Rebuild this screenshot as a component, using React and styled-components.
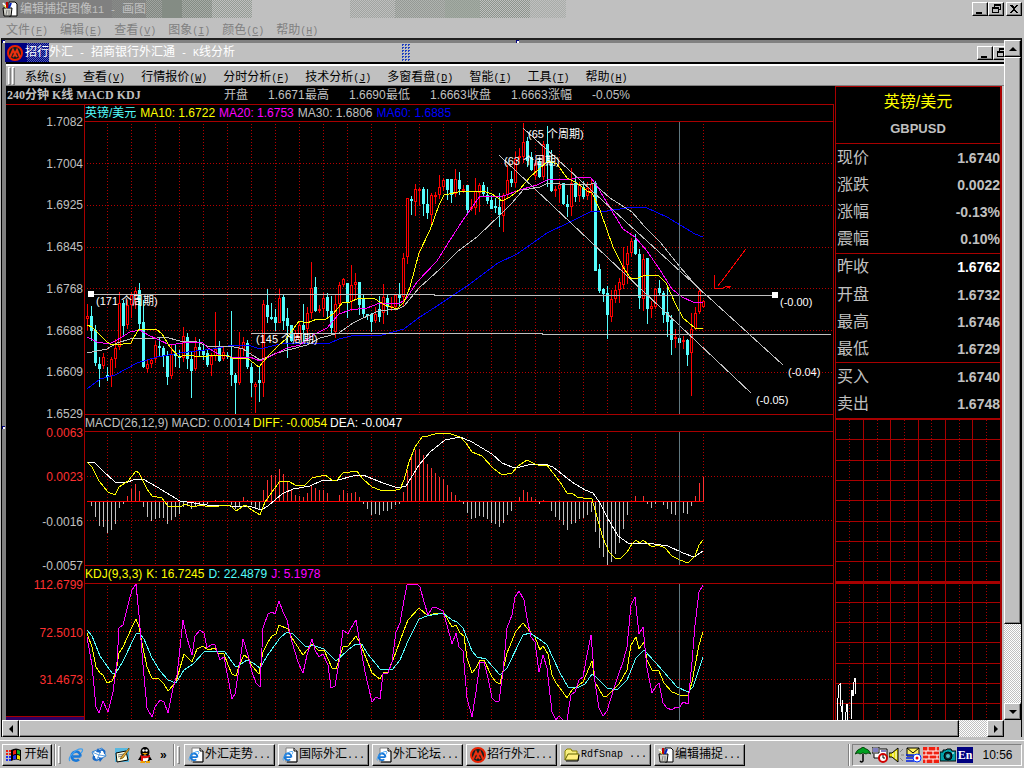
import React from 'react';
import styled, { createGlobalStyle, css } from 'styled-components';

const FACE = '#c0c0c0';
const SHADE = '#808080';
const LINE = '#a80000';
const DOTS = '#b40000';
const RED = '#ff0000';
const CYAN = '#54fcfc';
const YELLOW = '#ffff00';
const MAGENTA = '#ff00ff';
const BLUE = '#0000ff';

const Global = createGlobalStyle`
  *, *::before, *::after { box-sizing: border-box; }
  body { margin: 0; background: ${FACE}; }
  button { margin: 0; padding: 0; border: 0; background: none; color: inherit; font: inherit; }
  svg { display: block; flex: none; }
`;

const raised = css`
  background: ${FACE};
  border: 1px solid;
  border-color: #fff #000 #000 #fff;
  box-shadow: inset -1px -1px 0 ${SHADE};
`;
const checker = (a, b) => css`
  background: conic-gradient(${a} 25%, ${b} 0 50%, ${a} 0 75%, ${b} 0) 0 0 / 2px 2px;
`;

/* ---------- text ---------- */
const Mixed = styled.span`
  font-family: 'Liberation Mono', monospace;
  font-size: 10px;
  white-space: pre;
`;
const Han = styled.span`
  font-family: 'Noto Sans CJK SC', sans-serif;
  font-size: 12px;
`;
const Song = ({ children }) => (
  <Mixed>
    {children.split(/([\u4e00-\u9fff]+)/).filter(Boolean).map((part, i) =>
      /[\u4e00-\u9fff]/.test(part) ? <Han key={i}>{part}</Han> : part,
    )}
  </Mixed>
);

/* ---------- shell ---------- */
const Screen = styled.div`
  display: flex;
  flex-direction: column;
  min-height: 100vh;
  background: ${FACE};
  font: 12px/16px 'Liberation Sans', 'Noto Sans CJK SC', sans-serif;
`;
const OuterTitle = styled.header`
  position: relative;
  display: flex;
  align-items: center;
  height: 18px;
  padding: 0 2px;
  color: ${FACE};
`;
const Bands = styled.div`
  position: absolute;
  inset: 0;
  display: flex;
`;
const Band = styled.i`
  width: ${(p) => p.$w}px;
  ${(p) => checker(p.$a, p.$b)}
`;
const TitleText = styled.h1`
  position: relative;
  flex: 1;
  margin: 0 0 0 2px;
  font-size: 12px;
  font-weight: 400;
  line-height: 18px;
`;
const Buttons = styled.div`
  position: relative;
  display: flex;
`;
const WinButton = styled.button`
  ${raised}
  width: 16px;
  height: 14px;
  margin-left: ${(p) => (p.$apart ? 2 : 0)}px;
`;
const Menu = styled.nav`
  display: flex;
  align-items: center;
  gap: ${(p) => p.$gap}px;
  height: 20px;
  padding: 3px 0 0 ${(p) => p.$pad}px;
  color: ${(p) => p.$color};
  line-height: 17px;
`;
const Frame = styled.main`
  flex: 1;
  display: grid;
  grid-template: 1fr 17px / 1fr 17px;
  margin: 0 2px 0 1px;
  border: solid #000;
  border-width: 2px 1px 0 1px;
  border-top-color: #202020;
  background: ${FACE};
`;
const Canvas = styled.div`
  position: relative;
  display: flex;
  flex-direction: column;
  min-width: 0;
  padding: 3px 0 0 3px;
  background: ${SHADE};
  overflow: hidden;
`;
const Handle = styled.i`
  position: absolute;
  left: ${(p) => p.$x}px;
  top: ${(p) => p.$y}px;
  width: 3px;
  height: 3px;
  background: #fff;
  border: solid #000080;
  border-width: 1px 0 0 1px;
`;
const VBar = styled.div`
  display: flex;
  flex-direction: column;
  ${checker('#fff', FACE)}
`;
const HBar = styled.div`
  display: flex;
  ${checker('#fff', FACE)}
`;
const Arrow = styled.button`
  ${raised}
  display: grid;
  place-items: center;
  flex: none;
  width: 17px;
  height: 17px;
`;
const Thumb = styled.div`
  ${raised}
  flex: ${(p) => p.$part};
`;
const Slack = styled.div`
  flex: ${(p) => p.$part};
`;
const Corner = styled.div`
  background: ${FACE};
`;

/* ---------- application window ---------- */
const AppTitle = styled.div`
  display: flex;
  align-items: center;
  height: 19px;
  margin-right: -5px;
  background: ${FACE};
  color: #fff;
  line-height: 18px;
`;
const TitleLead = styled.div`
  display: flex;
  align-items: center;
  gap: 2px;
  height: 19px;
  padding-left: 2px;
  background: linear-gradient(90deg, #000080 22px, transparent 22px 44px, ${FACE} 44px),
    conic-gradient(#000080 25%, #5060b0 0 50%, #000080 0 75%, #5060b0 0) 0 0 / 2px 2px;
`;
const Dither = styled.i`
  width: 10px;
  height: 18px;
  margin-left: 166px;
  background: conic-gradient(#2040c0 25%, ${FACE} 0) 0 0 / 3px 3px;
`;
const Spring = styled.div`
  flex: 1;
`;
const MenuFrame = styled.div`
  display: flex;
  align-items: center;
  gap: 1px;
  height: 24px;
  margin-left: 1px;
  padding: 2px 0 0 2px;
  border-top: 2px solid #000;
  border-bottom: 1px solid ${SHADE};
  background: ${FACE};
  box-shadow: inset 0 2px 0 #fff;
`;
const Grip = styled.i`
  flex: none;
  width: 3px;
  height: ${(p) => p.$h}px;
  border: 1px solid;
  border-color: #fff ${SHADE} ${SHADE} #fff;
`;
const Work = styled.div`
  flex: 1;
  display: flex;
  min-height: 0;
  padding-right: 2px;
  margin-left: 1px;
  background: ${FACE};
`;
const Charts = styled.section`
  flex: 1;
  display: flex;
  flex-direction: column;
  min-width: 0;
  background: #000;
  color: ${FACE};
`;
const Readout = styled.div`
  display: flex;
  align-items: center;
  height: 18px;
`;
const Heading = styled.h2`
  width: 217px;
  margin: 0 0 0 1px;
  font: 700 12px/16px 'Liberation Serif', 'Noto Sans CJK SC', serif;
`;
const Figure = styled.span`
  display: flex;
  align-items: center;
  width: 81px;
  gap: 20px;
  white-space: nowrap;
`;
const Body = styled.div`
  flex: 1;
  display: flex;
  min-height: 0;
  border-top: 1px solid ${LINE};
  border-right: 1px solid ${LINE};
  margin-right: 1px;
`;
const Axis = styled.div`
  display: flex;
  flex-direction: column;
  gap: 5px;
  flex: none;
  width: 78px;
  padding-top: 10px;
`;
const Scale = styled.ol`
  display: flex;
  flex-direction: column;
  justify-content: space-between;
  height: ${(p) => p.$h}px;
  margin: 0;
  padding: 0 1px 0 0;
  list-style: none;
  text-align: right;
  line-height: 14px;
`;
const Tick = styled.li`
  color: ${(p) => (p.$hot ? '#ff3030' : FACE)};
`;
const AxisFoot = styled.div`
  height: 4px;
  margin-top: auto;
  border-top: 1px solid ${LINE};
  background: #300060;
`;
const Panels = styled.div`
  flex: 1;
  display: flex;
  flex-direction: column;
  min-width: 0;
  border-left: 1px solid ${LINE};
`;
const Panel = styled.figure`
  display: flex;
  flex-direction: column;
  flex: ${(p) => (p.$grow ? '1' : 'none')};
  min-height: 0;
  margin: 0;
`;
const Caption = styled.figcaption`
  display: flex;
  gap: ${(p) => p.$gap}px;
  height: ${(p) => p.$h || 16}px;
  line-height: 16px;
  white-space: nowrap;
`;
const Ink = styled.span`
  color: ${(p) => p.$c};
`;
const Plot = styled.div`
  flex: ${(p) => (p.$h ? 'none' : '1')};
  height: ${(p) => (p.$h ? p.$h + 'px' : 'auto')};
  min-height: 120px;
  contain: size;
  overflow: hidden;
  border-top: 1px solid ${LINE};
  border-bottom: ${(p) => (p.$h ? 1 : 0)}px solid ${LINE};
`;
const Note = styled.text`
  fill: #fff;
  font: 11px 'Liberation Sans', 'Noto Sans CJK SC', sans-serif;
`;

/* ---------- quote column ---------- */
const Quotes = styled.aside`
  display: flex;
  flex-direction: column;
  flex: none;
  width: 167px;
  border: solid ${LINE};
  border-width: 1px 2px 0 1px;
  background: #000;
  color: ${FACE};
`;
const Pair = styled.h3`
  margin: 0;
  height: 28px;
  font-size: 16px;
  font-weight: 400;
  line-height: 30px;
  text-align: center;
  color: ${YELLOW};
`;
const Code = styled.p`
  margin: 0;
  height: 28px;
  font-size: 13px;
  font-weight: 700;
  line-height: 28px;
  text-align: center;
`;
const QuoteTable = styled.table`
  width: 100%;
  height: 277px;
  border-collapse: collapse;
  border-bottom: 2px solid ${LINE};
`;
const QuoteGroup = styled.tbody`
  border-top: 1px solid ${LINE};
`;
const QuoteName = styled.th`
  padding: 0 0 0 1px;
  font-size: 16px;
  font-weight: 400;
  line-height: 24px;
  text-align: left;
`;
const QuoteValue = styled.td`
  padding: 0;
  font-size: 14px;
  font-weight: 700;
  text-align: right;
  color: ${(p) => (p.$bright ? '#fff' : FACE)};
`;
const TickArea = styled.div`
  flex: 1;
  min-height: 120px;
  contain: size;
  overflow: hidden;
`;

/* ---------- task bar ---------- */
const Taskbar = styled.footer`
  display: flex;
  align-items: center;
  height: 28px;
  margin-top: 3px;
  padding: 2px 2px 2px 2px;
  border-top: 1px solid #fff;
  background: ${FACE};
  line-height: 18px;
`;
const StartButton = styled.button`
  ${raised}
  display: flex;
  align-items: center;
  justify-content: center;
  gap: 2px;
  width: 50px;
  height: 22px;
`;
const Divider = styled.i`
  flex: none;
  width: 2px;
  height: 22px;
  margin: 0 2px;
  border-left: 1px solid ${SHADE};
  border-right: 1px solid #fff;
`;
const Quick = styled.div`
  display: flex;
  align-items: center;
  gap: 7px;
  flex: none;
  width: 110px;
  padding-left: 7px;
`;
const Tasks = styled.div`
  display: flex;
  flex: 1;
  gap: 3px;
  min-width: 0;
  margin-left: 4px;
`;
const Task = styled.button`
  ${raised}
  display: flex;
  align-items: center;
  flex: 0 1 91px;
  height: 22px;
  padding-left: 3px;
  gap: 1px;
  overflow: hidden;
`;
const Tray = styled.div`
  display: flex;
  align-items: center;
  gap: 1px;
  flex: none;
  width: 170px;
  height: 22px;
  padding-left: 2px;
  border: 1px solid;
  border-color: ${SHADE} #fff #fff ${SHADE};
`;
const Lang = styled.span`
  width: 16px;
  background: #000080;
  color: #fff;
  font: 700 12px/16px 'Liberation Serif', serif;
  text-align: center;
`;
const Clock = styled.time`
  flex: 1;
  font-size: 12px;
  text-align: center;
`;

/* ---------- data ---------- */
/* Candle samples: high, body top, body bottom, low, in thirds of a pixel below y = 100; "r" rises, "c" falls. */
const CANDLES = `r612,648,656,690 c618,648,692,722 c675,690,788,797 c770,792,806,860 r760,770,797,808 c802,825,831,842 r772,778,828,860 r718,745,776,803 r576,610,740,750 c600,610,678,706 r600,615,674,686 r575,586,616,655 r560,574,588,628 c549,570,672,686 c600,666,800,805 r780,793,806,818 r776,780,792,804 r722,736,778,788 c710,738,744,770 c738,744,768,800 c752,768,830,854 r734,762,828,836 c735,760,768,800 c750,768,772,803 r680,708,774,785 c698,712,776,806 c755,777,812,893 r712,740,808,812 c718,740,752,770 c736,750,766,780 c750,758,794,800 r760,768,796,828 r635,748,768,784 c722,745,782,786 r738,755,776,782 c755,764,772,776 c632,770,824,858 c820,824,848,942 r697,745,850,855 r712,725,746,768 c720,730,802,806 c790,802,848,890 r845,852,860,938 c798,840,850,906 r600,612,848,890 c567,615,650,668 c608,650,655,660 c628,652,668,694 r568,595,668,670 c584,592,664,690 c624,655,678,773 c674,676,722,727 r690,700,722,722 r670,676,720,724 c612,675,690,727 r622,638,688,704 r486,565,640,658 c532,562,632,636 r614,628,632,640 r580,595,628,652 c578,592,632,656 c588,633,685,698 r585,612,695,714 r545,556,612,640 r533,536,556,560 c548,550,606,654 r495,555,606,634 r520,546,556,600 c545,546,616,645 c585,594,643,652 c642,643,648,660 c640,643,665,695 r620,642,662,668 c588,628,650,666 r552,590,640,672 c584,594,620,645 r590,618,625,632 r585,585,622,626 c549,585,594,620 r460,475,592,618 r294,295,472,492 c288,296,304,345 r253,268,306,348 r265,268,270,318 c262,268,312,348 c266,312,338,356 r280,285,344,372 r275,284,290,312 r225,262,284,298 r235,240,262,272 c236,238,270,300 c236,238,284,308 r207,238,282,290 c215,240,268,286 r255,266,270,278 c256,256,330,338 r298,320,328,334 r235,272,325,345 r250,256,278,336 c246,256,282,292 c262,284,302,312 c284,300,328,328 c294,318,324,338 c278,321,345,380 r280,284,348,395 r195,240,284,294 c213,236,248,260 r155,178,248,262 r145,168,172,185 r68,125,170,188 c110,122,182,200 c156,170,210,212 r180,190,228,240 c175,185,232,235 r122,132,230,240 c78,132,190,262 c150,186,272,276 r258,268,272,290 r246,256,266,308 c250,250,312,316 c284,312,322,350 r205,250,322,348 c232,250,290,306 r247,254,287,305 c243,260,290,296 r246,265,288,300 r236,252,276,334 c243,250,512,512 c492,506,572,578 c564,567,581,606 c558,580,644,716 r570,598,650,666 r555,570,596,608 r533,546,570,608 r441,498,556,567 r438,460,496,552 r414,424,460,472 c402,420,462,466 c448,462,594,626 r462,478,598,632 c474,475,626,672 r604,618,628,654 r565,568,620,626 c540,564,578,586 c573,578,645,668 c565,636,665,710 c646,660,720,765 r686,711,716,744 c712,714,728,728 r708,720,724,746 c716,720,765,798 r640,688,760,887 r620,640,688,690 r568,572,636,642 r600,604,620,624`
  .split(' ')
  .map((s) => ({ up: s[0] === 'r', v: s.slice(1).split(',').map((n) => 100 + Math.round(n / 3)) }));

/* Histogram ends, in thirds of a pixel below y = 410; the zero line lies at 274. */
const BARS = '274,288,320,348,352,368,360,342,294,282,258,236,222,243,290,320,334,328,324,324,342,330,320,312,290,284,298,288,284,284,282,276,270,274,270,272,284,296,288,262,270,286,298,300,240,210,195,195,177,192,212,236,255,257,262,250,229,234,240,240,249,274,274,255,240,249,249,246,262,282,297,315,313,315,303,303,297,284,281,246,180,142,120,117,136,162,175,190,201,208,225,246,255,270,281,308,326,323,317,321,326,338,341,351,338,315,303,274,261,240,246,262,268,282,270,274,303,320,330,345,360,342,338,326,323,315,305,366,413,440,465,456,432,398,356,315,274,258,274,258,281,293,281,274,285,297,312,315,315,308,312,288,258,218,200'
  .split(',')
  .map((n) => 410 + Math.round(n / 3));

const MA10 = '87,325 92,327 96,331 103,338 107,342 112,345 123,344 131,343 134,337 139,329 156,329 162,334 170,347 179,357 185,355 203,357 213,355 227,356 235,359 247,358 259,367 268,356 277,347 287,338 299,321 307,323 317,319 325,320 333,314 343,302 350,302 359,298 375,299 385,305 397,309 404,302 410,287 419,253 430,230 439,205 444,195 463,191 483,191 492,194 502,201 510,197 520,189 530,177 548,161 557,164 567,178 577,183 587,191 592,193 600,210 613,247 623,267 631,279 638,278 645,275 658,275 666,283 675,303 683,318 695,328 703,328';
const MA20 = '87,337 97,342 109,344 117,340 130,332 140,330 148,335 170,345 183,343 202,342 208,348 220,355 237,358 250,357 260,361 273,355 287,348 300,345 313,335 327,328 339,314 350,310 367,308 380,303 400,303 406,299 417,282 437,261 450,240 463,220 480,196 503,196 523,189 537,185 547,180 572,179 580,177 590,177 596,184 607,203 623,229 635,237 647,251 660,270 672,289 682,297 693,302 703,303';
const MA30 = '87,353 107,349 117,343 130,339 157,338 165,337 180,341 197,342 210,347 230,346 243,349 260,360 277,353 307,345 320,338 339,333 343,330 353,323 378,311 398,309 404,306 419,288 440,269 457,252 477,237 500,215 512,203 523,190 540,187 548,183 560,184 589,185 593,183 610,198 632,212 645,227 660,242 680,267 692,281 703,293';
const MA60 = '87,389 100,379 115,375 137,363 157,357 180,353 213,349 228,346 248,345 260,349 280,344 300,343 330,343 339,339 355,335 382,335 404,329 417,319 440,304 470,284 498,263 517,254 547,233 570,222 590,212 607,211 633,207 645,207 667,217 695,234 703,237';
const DIFF = '87,462 92,467 99,481 108,492 115,495 119,487 128,481 136,471 139,473 147,489 152,496 162,498 168,506 180,507 185,504 192,507 202,505 208,507 230,505 236,511 245,505 252,510 260,515 265,502 272,492 280,481 288,481 297,486 305,485 312,478 325,475 332,480 337,480 343,473 357,471 363,479 372,487 380,490 392,491 400,489 404,480 409,462 415,447 422,437 428,436 438,433 448,433 460,437 466,443 472,452 482,456 493,468 502,475 512,473 518,466 527,460 533,463 540,466 547,465 553,473 560,482 567,493 572,493 577,497 583,498 592,499 597,517 603,538 609,552 615,558 621,558 627,552 632,544 636,540 640,543 643,540 652,547 658,545 665,548 672,556 680,560 688,563 695,556 699,545 703,540';
const DEA = '87,462 95,463 103,471 115,482 126,483 135,479 143,479 157,487 180,501 207,505 230,506 252,507 261,510 268,506 282,494 293,489 310,486 323,480 338,480 353,476 363,475 383,483 398,488 406,486 419,465 430,452 445,440 460,437 472,442 492,454 502,463 512,467 520,467 532,464 545,464 553,467 572,482 585,490 593,493 600,503 607,517 618,536 628,543 647,543 668,546 683,553 694,557 703,551';
const K = '87,633 92,647 96,667 100,673 103,675 107,683 112,681 116,672 119,653 123,647 132,627 136,619 139,627 143,648 147,667 152,678 159,679 164,684 168,691 176,682 180,668 184,654 192,662 197,649 203,646 208,650 215,648 218,653 224,654 228,665 232,674 236,676 239,666 244,655 248,658 252,666 259,674 263,652 268,642 272,636 276,634 279,625 288,629 292,638 303,655 312,644 319,651 324,650 332,668 336,669 343,647 348,646 356,636 360,643 372,673 380,679 384,672 388,672 396,652 404,630 408,620 419,608 428,616 435,613 444,613 452,627 456,625 460,633 464,636 467,658 472,673 476,668 480,660 484,660 492,677 496,682 500,684 507,653 516,631 523,623 532,634 535,637 540,650 543,646 548,654 552,675 556,683 560,688 567,698 572,690 583,682 592,661 595,682 603,696 607,696 619,684 627,670 631,645 636,637 639,649 644,642 647,660 652,670 659,671 664,683 672,692 680,695 688,696 692,682 699,645 703,632';
const D = '87,630 92,636 100,656 112,673 116,673 123,661 136,634 139,633 144,639 152,658 160,671 168,680 176,683 184,670 193,664 204,652 210,651 225,652 235,666 238,666 247,660 253,663 260,668 267,656 280,638 287,632 293,634 306,647 312,645 324,649 336,661 348,650 356,644 362,644 367,653 380,669 392,670 400,660 408,641 419,619 427,616 443,613 452,620 457,622 463,628 472,651 477,657 486,659 500,675 507,668 523,635 530,633 542,641 547,645 560,673 568,687 577,688 585,684 592,674 597,678 607,688 617,690 627,680 636,658 644,650 655,662 663,671 677,687 688,692 693,687 703,657';
const J = '87,637 92,665 96,707 99,713 103,701 108,712 113,692 117,662 119,628 123,625 128,605 132,590 136,584 139,615 143,665 147,708 152,717 155,707 160,700 164,702 168,713 173,688 177,675 180,648 183,620 187,638 192,655 195,636 200,630 204,633 207,648 212,644 215,645 220,660 224,657 232,699 235,694 240,662 243,639 248,655 252,672 256,683 260,687 263,628 268,614 272,612 275,614 279,601 283,612 287,620 292,642 298,662 303,673 307,655 312,639 315,650 319,657 323,654 328,665 331,688 335,686 339,662 343,630 348,634 351,628 356,620 359,638 365,672 372,702 376,697 380,699 383,674 388,673 392,662 396,632 400,623 404,600 407,585 417,584 420,587 424,602 428,615 432,608 435,607 443,611 447,625 452,644 456,633 459,647 463,651 467,698 472,717 476,692 480,662 484,662 488,678 492,698 496,702 499,701 503,672 507,628 512,615 515,597 519,591 524,600 527,618 531,637 535,642 539,672 543,655 547,668 552,712 556,720 559,716 563,720 567,720 571,695 575,692 579,680 583,677 587,655 591,635 595,682 599,708 603,716 607,711 611,698 615,685 619,673 623,662 627,647 631,605 635,597 639,634 643,627 647,668 652,693 656,686 659,683 663,703 667,708 672,710 676,707 679,708 683,702 688,704 692,662 695,625 699,592 703,585';

const COLUMNS = [...Array.from({ length: 18 }, (_, i) => 107 + 24 * i), ...Array.from({ length: 8 }, (_, i) => 535 + 24 * i)];

const Curve = ({ points, color }) => <polyline points={points} fill="none" stroke={color} />;

function ChartSvg({ top, levels, label, children }) {
  return (
    <svg width="100%" height="100%" shapeRendering="crispEdges" role="img" aria-label={label}>
      <g transform={`translate(-85 ${-top})`}>
        {COLUMNS.map((x) => (
          <line key={x} x1={x} x2={x} y1={top + 2} y2={top + 600} stroke={DOTS} strokeDasharray="1 2" />
        ))}
        {levels.map((y) => (
          <line key={y} x1="87" x2="833" y1={y} y2={y} stroke={DOTS} strokeDasharray="1 2" />
        ))}
        {children}
        <rect x="679" y={top} width="1" height="600" fill="#607880" />
      </g>
    </svg>
  );
}

const Price = () => (
  <ChartSvg top={122} levels={[163, 205, 247, 288, 330, 372]} label="英镑/美元 K线">
    {CANDLES.map(({ up, v: [hi, top, bottom, lo] }, i) => {
      const x = 87 + 4 * i;
      const h = Math.max(bottom - top, 2);
      const c = up ? RED : CYAN;
      return (
        <g key={i} fill={c}>
          <rect x={x} y={hi} width="1" height={lo - hi} />
          <rect x={x - 1} y={top} width="3" height={h} />
          {up && h > 2 && <rect x={x} y={top + 1} width="1" height={h - 2} fill="#000" />}
        </g>
      );
    })}
    <Curve points={MA60} color={BLUE} />
    <Curve points={MA30} color={FACE} />
    <Curve points={MA20} color={MAGENTA} />
    <Curve points={MA10} color={YELLOW} />
    <g fill="none" stroke={FACE}>
      <path d="M91 294H434V295H775M251 333H542V334H831M523 128L783 365M499 155L751 393" />
    </g>
    <path d="M88 291h6v6h-6zM772 292h6v6h-6z" fill="#fff" />
    <path d="M746 249L718 286M714 275V288H723L727 286H731M727 287H730" fill="none" stroke={RED} />
    <Note x="96" y="305">(171 个周期)</Note>
    <Note x="256" y="343">(145 个周期)</Note>
    <Note x="528" y="138">(65 个周期)</Note>
    <Note x="504" y="165">(63 个周期)</Note>
    <Note x="780" y="306">(-0.00)</Note>
    <Note x="788" y="376">(-0.04)</Note>
    <Note x="756" y="404">(-0.05)</Note>
  </ChartSvg>
);

const Macd = () => (
  <ChartSvg top={432} levels={[476, 520]} label="MACD">
    {BARS.map((y, i) => (
      <rect key={i} x={87 + 4 * i} y={Math.min(y, 501)} width="1" height={Math.abs(y - 501)} fill={y < 501 ? '#ff3030' : FACE} />
    ))}
    <rect x="87" y="501" width="617" height="1" fill={RED} />
    <Curve points={DEA} color="#fff" />
    <Curve points={DIFF} color={YELLOW} />
  </ChartSvg>
);

const Kdj = () => (
  <ChartSvg top={584} levels={[631, 679]} label="KDJ">
    <Curve points={K} color={YELLOW} />
    <Curve points={D} color={CYAN} />
    <Curve points={J} color={MAGENTA} />
  </ChartSvg>
);

const TickChart = () => (
  <svg width="100%" height="100%" shapeRendering="crispEdges" role="img" aria-label="分时">
    {[1, 2, 3, 4, 5].map((k) => (
      <line key={k} x1={`${(k * 100) / 6}%`} x2={`${(k * 100) / 6}%`} y1="0" y2="600" stroke={LINE} />
    ))}
    {[1, 3, 5, 7, 9, 11].map((k) => (
      <line key={k} x1={`${(k * 100) / 12}%`} x2={`${(k * 100) / 12}%`} y1="0" y2="600" stroke={LINE} strokeDasharray="1 2" />
    ))}
    {[19, 40, 60, 80, 101, 121, 141, 182, 202, 222, 243, 263, 283].map((y) => (
      <rect key={y} x="0" y={y} width="100%" height="1" fill={LINE} />
    ))}
    <rect x="0" y="161" width="100%" height="3" fill={LINE} />
    <path d="M1 300V292L3 265L4 264V280L6 292V280L7 300M9 300L11 284L12 300M15 300L16 270L17 276L18 262L19 258L20 274" fill="none" stroke="#fff" />
  </svg>
);

/* ---------- icons ---------- */
const Svg16 = ({ children, size = 16 }) => (
  <svg width={size} height={size} viewBox="0 0 16 16" aria-hidden="true">{children}</svg>
);
const PaintIcon = () => (
  <Svg16>
    <path d="M7 1h6l2 2v12H7z" fill="#fff" stroke="#000" />
    <path d="M1 7h9l-1 8H2z" fill="#d0d0c8" stroke="#000" />
    <path d="M5 9l-1 5M7 9v5" stroke={SHADE} />
    <path d="M1 2l4 5" stroke="#fff" strokeWidth="2" />
    <path d="M5 1v6" stroke="#c00000" strokeWidth="2" />
    <path d="M9 2L7 7" stroke="#0020c0" strokeWidth="2" />
    <path d="M2 4l2 3" stroke="#e0e000" />
  </Svg16>
);
const BankIcon = () => (
  <Svg16>
    <circle cx="8" cy="8" r="7" fill="#102020" stroke="#e82000" strokeWidth="2" />
    <path d="M3 12L6 5l2 4 2-4 3 7M6 12l2-3 2 3" fill="none" stroke="#e83010" strokeWidth="2" />
  </Svg16>
);
const IeMark = () => (
  <>
    <path d="M12.5 9.5H5M12.5 9.5A4.5 4.5 0 1 0 11 12.5" fill="none" stroke="#1878d8" strokeWidth="2.5" />
    <path d="M2 14C-1 11 8 1 14 2c1 1 0 3-1 4" fill="none" stroke="#40a0f0" strokeWidth="1.2" />
  </>
);
const IeIcon = () => <Svg16><IeMark /></Svg16>;
const PageIcon = () => (
  <Svg16>
    <path d="M4 1h8l3 3v11H4z" fill="#fff" stroke={SHADE} />
    <path d="M12 1v3h3M15 4v11H5" fill="none" stroke="#000" />
    <g transform="translate(0 3) scale(.75)"><IeMark /></g>
  </Svg16>
);
const MailIcon = () => (
  <Svg16>
    <path d="M1 5l10-4 4 8-10 5z" fill="#fff" stroke="#3080d0" />
    <path d="M1 5l7 3 3-7M5 14l3-6 7 1" fill="none" stroke="#60a0e0" />
    <path d="M2 9c-2 4 2 6 6 4l1 2 3-4-5-1 1 2c-3 1-4 0-4-3zM14 7c2-4-2-6-6-4L7 1 5 5l5 1-1-2c3-1 4 0 4 3z" fill="#1868c8" />
  </Svg16>
);
const DesktopIcon = () => (
  <Svg16>
    <path d="M1 1h14v14H1z" fill="#58b8e0" />
    <path d="M2 6l10-2 2 9-11 2z" fill="#ffffe0" stroke="#000" />
    <path d="M4 8l6-1M4 10l4-1" stroke={SHADE} />
    <path d="M15 1L8 9l-2 3 3-1 6-8z" fill="#f0b030" stroke="#604000" strokeWidth=".7" />
  </Svg16>
);
const PenguinIcon = () => (
  <Svg16>
    <ellipse cx="8" cy="5" rx="4.5" ry="5" />
    <path d="M4 8h8l3 5h-2l-2 2H5l-2-2H1z" />
    <ellipse cx="8" cy="11.5" rx="3.5" ry="3" fill="#fff" />
    <circle cx="6.5" cy="3.5" r="1.2" fill="#fff" /><circle cx="9.5" cy="3.5" r="1.2" fill="#fff" />
    <path d="M5 6h6l-3 2zM4 14h4v2H3zM9 14h4v2H9z" fill="#f0a000" />
    <path d="M3 8q5 2 10 0v2q-5 2-7 1v3H4v-4z" fill="#e01010" />
  </Svg16>
);
const FolderIcon = () => (
  <Svg16>
    <path d="M1 13V4l2-2h4l1 2h5v3" fill="#f8f080" stroke="#888000" />
    <path d="M1 13L4 7h11l-1 6z" fill="#fff080" stroke="#606000" />
    <path d="M2 14h12l1-6" fill="none" stroke="#000" />
  </Svg16>
);
const WindowsIcon = () => (
  <svg width="17" height="16" viewBox="0 0 17 16" aria-hidden="true">
    <path d="M6 3q5-3 10 0v11q-5-3-10 0z" />
    <path d="M8 4q1-1 3-1v4q-2 0-3 1z" fill="#f02010" />
    <path d="M12 3q2 0 3 1v4q-1-1-3-1z" fill="#10b020" />
    <path d="M8 9q1-1 3-1v4q-2 0-3 1z" fill="#2030f0" />
    <path d="M12 8q2 0 3 1v4q-1-1-3-1z" fill="#f0e000" />
    <path d="M1 4h2M4 4h2M1 7h2M4 7h2" stroke="#f02010" strokeWidth="2" />
    <path d="M1 10h2M4 10h2M1 13h2M4 13h2" stroke="#2030f0" strokeWidth="2" />
  </svg>
);
const Umbrella = () => (
  <Svg16>
    <path d="M0 7q2-5 7-6V0h2v1q5 1 7 6l-3-1-2 1-3-1-3 1-2-1z" fill="#00a020" stroke="#003000" strokeWidth=".8" />
    <path d="M8 7v7q-1 2-3 0" fill="none" stroke="#000" strokeWidth="1.5" />
  </Svg16>
);
const Scheduler = () => (
  <Svg16>
    <path d="M0 0h7v6H0zM8 2h7v9H2V7" fill="#fff" stroke="#000" />
    <path d="M1 2h5M1 4h5M9 4h5" stroke="#000080" />
    <circle cx="11" cy="11" r="4" fill="#fff" stroke="#d00000" strokeWidth="2" />
    <path d="M11 8v3h2" fill="none" stroke="#000" />
  </Svg16>
);
const Speaker = () => (
  <Svg16>
    <path d="M0 6h3l6-5v14l-6-5H0z" fill="#e8e000" stroke="#000" />
    <path d="M4 6v4M7 4v8" stroke="#fff" />
    <path d="M11 5l3-3M12 8h3M11 11l3 3" stroke={SHADE} />
  </Svg16>
);
const MailCheck = () => (
  <Svg16>
    <path d="M1 1h12v8H1z" fill="#fff060" stroke="#000" />
    <path d="M1 1l6 5 6-5" fill="none" stroke="#000" />
    <path d="M0 8h8M0 11h8M0 14h8" stroke="#0020e0" strokeWidth="1.5" />
    <circle cx="11" cy="11" r="4" fill="#fff" stroke="#0030ff" />
    <circle cx="11" cy="11" r="1.5" fill="#f00000" />
  </Svg16>
);
const Bricks = () => (
  <Svg16>
    <path d="M0 0h16v16H0z" fill="#f02010" />
    <path d="M0 4h16M0 8h16M0 12h16M5 0v4M13 0v4M3 4v4M10 4v4M6 8v4M14 8v4M3 12v4M10 12v4" stroke="#fff" />
  </Svg16>
);
const Camera = () => (
  <Svg16>
    <path d="M0 5h3V3h3l1-1h4l1 2h4v10H0z" fill="#00a0a8" stroke="#000" />
    <circle cx="8" cy="9" r="4" fill="#102830" stroke="#000" />
    <circle cx="8" cy="9" r="2" fill="#50c0c8" />
    <path d="M12 6h2" stroke="#fff" />
  </Svg16>
);
const glyphs = {
  min: 'M3 9h6v2H3z',
  restore: 'M5 1h7v6h-2v3H3V4h2zM6 3v1h4v2h1V3zM4 6v3h5V6z',
  close: 'M3 2h2l2 2 2-2h2L8 6l3 4H9L7 7l-2 3H3l3-4z',
};
const WinGlyph = ({ kind }) => (
  <svg width="14" height="12" shapeRendering="crispEdges" aria-hidden="true"><path d={glyphs[kind]} fillRule="evenodd" /></svg>
);
const Tri = ({ d }) => <svg width="8" height="8" aria-hidden="true"><path d={d} /></svg>;

/* ---------- content ---------- */
const OUTER_MENU = ['文件(F)', '编辑(E)', '查看(V)', '图象(I)', '颜色(C)', '帮助(H)'];
const APP_MENU = ['系统(S)', '查看(V)', '行情报价(W)', '分时分析(F)', '技术分析(J)', '多窗看盘(D)', '智能(I)', '工具(T)', '帮助(H)'];
const Mnemonic = styled.u``;
const MenuItem = ({ text }) => {
  const [name, key] = text.replace(')', '').split('(');
  return (
    <button type="button">
      <Mixed><Han>{name}</Han>(<Mnemonic>{key}</Mnemonic>)</Mixed>
    </button>
  );
};
const FIGURES = [['开盘', '1.6671'], ['最高', '1.6690'], ['最低', '1.6663'], ['收盘', '1.6663'], ['涨幅', '-0.05%']];
const QUOTES = [
  [['现价', '1.6740'], ['涨跌', '0.0022'], ['涨幅', '-0.13%'], ['震幅', '0.10%']],
  [['昨收', '1.6762', true], ['开盘', '1.6732'], ['最高', '1.6746'], ['最低', '1.6729']],
  [['买入', '1.6740'], ['卖出', '1.6748']],
];
const TASKS = [
  [PageIcon, '外汇走势...'], [PageIcon, '国际外汇...'], [PageIcon, '外汇论坛...'],
  [BankIcon, '招行外汇...'], [FolderIcon, 'RdfSnap ...'], [PaintIcon, '编辑捕捉...'],
];
const BANDS = [
  [112, '#808080', '#808080'], [34, '#808080', '#888c88'], [16, '#808680', '#a0a4a0'], [20, '#848c84', '#848c84'],
  [30, '#848c84', '#a8aca8'], [40, '#949c94', FACE], [98, FACE, FACE], [45, '#a0a4a0', FACE], [50, '#949894', '#b0b4b0'],
  [35, '#949c94', '#a4aca4'], [50, '#8c948c', FACE], [36, '#a8aca8', FACE],
];

export default function App() {
  return (
    <Screen>
      <Global />
      <OuterTitle>
        <Bands>{BANDS.map(([w, a, b], i) => <Band key={i} $w={w} $a={a} $b={b} />)}</Bands>
        <Buttons><PaintIcon /></Buttons>
        <TitleText><Song>编辑捕捉图像11 - 画图</Song></TitleText>
        <Buttons>
          <WinButton aria-label="最小化"><WinGlyph kind="min" /></WinButton>
          <WinButton aria-label="还原"><WinGlyph kind="restore" /></WinButton>
          <WinButton $apart aria-label="关闭"><WinGlyph kind="close" /></WinButton>
        </Buttons>
      </OuterTitle>
      <Menu $gap={12} $pad={6} $color={SHADE}>{OUTER_MENU.map((t) => <MenuItem key={t} text={t} />)}</Menu>

      <Frame>
        <Canvas>
          <Handle $x={0} $y={0} /><Handle $x={514} $y={0} /><Handle $x={0} $y={386} />
          <AppTitle>
            <TitleLead><BankIcon /><Song>招行外汇 - 招商银行外汇通 - K线分析</Song></TitleLead>
            <Dither />
            <Spring />
            <Buttons>
              <WinButton aria-label="最小化"><WinGlyph kind="min" /></WinButton>
              <WinButton aria-label="还原"><WinGlyph kind="restore" /></WinButton>
            </Buttons>
          </AppTitle>
          <MenuFrame>
            <Grip $h={18} /><Grip $h={18} />
            <Menu $gap={16} $pad={9} $color="#000">{APP_MENU.map((t) => <MenuItem key={t} text={t} />)}</Menu>
          </MenuFrame>
          <Work>
            <Charts>
              <Readout>
                <Heading>240分钟 K线 MACD KDJ</Heading>
                {FIGURES.map(([name, value]) => (
                  <Figure key={name}><span>{name}</span><span>{value}</span></Figure>
                ))}
              </Readout>
              <Body>
                <Axis>
                  <Scale $h={306}>
                    {['1.7082', '1.7004', '1.6925', '1.6845', '1.6768', '1.6688', '1.6609', '1.6529'].map((t) => <Tick key={t}>{t}</Tick>)}
                  </Scale>
                  <Scale $h={147}>
                    <Tick $hot>0.0063</Tick><Tick $hot>0.0023</Tick><Tick>-0.0016</Tick><Tick>-0.0057</Tick>
                  </Scale>
                  <Scale $h={109}>
                    <Tick $hot>112.6799</Tick><Tick $hot>72.5010</Tick><Tick $hot>31.4673</Tick>
                  </Scale>
                  <AxisFoot />
                </Axis>
                <Panels>
                  <Panel>
                    <Caption $gap={4}>
                      <Ink $c={CYAN}>英镑/美元</Ink><Ink $c={YELLOW}>MA10: 1.6722</Ink><Ink $c={MAGENTA}>MA20: 1.6753</Ink>
                      <Ink $c={FACE}>MA30: 1.6806</Ink><Ink $c={BLUE}>MA60: 1.6885</Ink>
                    </Caption>
                    <Plot $h={294}><Price /></Plot>
                  </Panel>
                  <Panel>
                    <Caption $gap={3}>
                      <Ink $c={FACE}>MACD(26,12,9)</Ink><Ink $c={FACE}>MACD: 0.0014</Ink><Ink $c={YELLOW}>DIFF: -0.0054</Ink><Ink $c="#fff">DEA: -0.0047</Ink>
                    </Caption>
                    <Plot $h={135}><Macd /></Plot>
                  </Panel>
                  <Panel $grow>
                    <Caption $gap={4} $h={17}>
                      <Ink $c={YELLOW}>KDJ(9,3,3)</Ink><Ink $c={YELLOW}>K: 16.7245</Ink><Ink $c={CYAN}>D: 22.4879</Ink><Ink $c={MAGENTA}>J: 5.1978</Ink>
                    </Caption>
                    <Plot><Kdj /></Plot>
                  </Panel>
                </Panels>
              </Body>
            </Charts>
            <Quotes>
              <Pair>英镑/美元</Pair>
              <Code>GBPUSD</Code>
              <QuoteTable>
                {QUOTES.map((rows, i) => (
                  <QuoteGroup key={i}>
                    {rows.map(([name, value, bright]) => (
                      <tr key={name}><QuoteName scope="row">{name}</QuoteName><QuoteValue $bright={bright}>{value}</QuoteValue></tr>
                    ))}
                  </QuoteGroup>
                ))}
              </QuoteTable>
              <TickArea><TickChart /></TickArea>
            </Quotes>
          </Work>
        </Canvas>
        <VBar>
          <Arrow aria-label="向上"><Tri d="M4 2l4 4H0z" /></Arrow>
          <Thumb $part={567} /><Slack $part={79} />
          <Arrow aria-label="向下"><Tri d="M0 2h8L4 6z" /></Arrow>
        </VBar>
        <HBar>
          <Arrow aria-label="向左"><Tri d="M6 0v8L2 4z" /></Arrow>
          <Thumb $part={940} /><Slack $part={28} />
          <Arrow aria-label="向右"><Tri d="M2 0l4 4-4 4z" /></Arrow>
        </HBar>
        <Corner />
      </Frame>

      <Taskbar>
        <StartButton><WindowsIcon /><Song>开始</Song></StartButton>
        <Divider /><Grip $h={18} />
        <Quick><IeIcon /><MailIcon /><DesktopIcon /><PenguinIcon /><b>»</b></Quick>
        <Divider /><Grip $h={18} />
        <Tasks>{TASKS.map(([Icon, text]) => <Task key={text}><Icon /><Song>{text}</Song></Task>)}</Tasks>
        <Divider />
        <Tray>
          <Umbrella /><Scheduler /><Speaker /><MailCheck /><Bricks /><Camera />
          <Lang>En</Lang>
          <Clock>10:56</Clock>
        </Tray>
      </Taskbar>
    </Screen>
  );
}
